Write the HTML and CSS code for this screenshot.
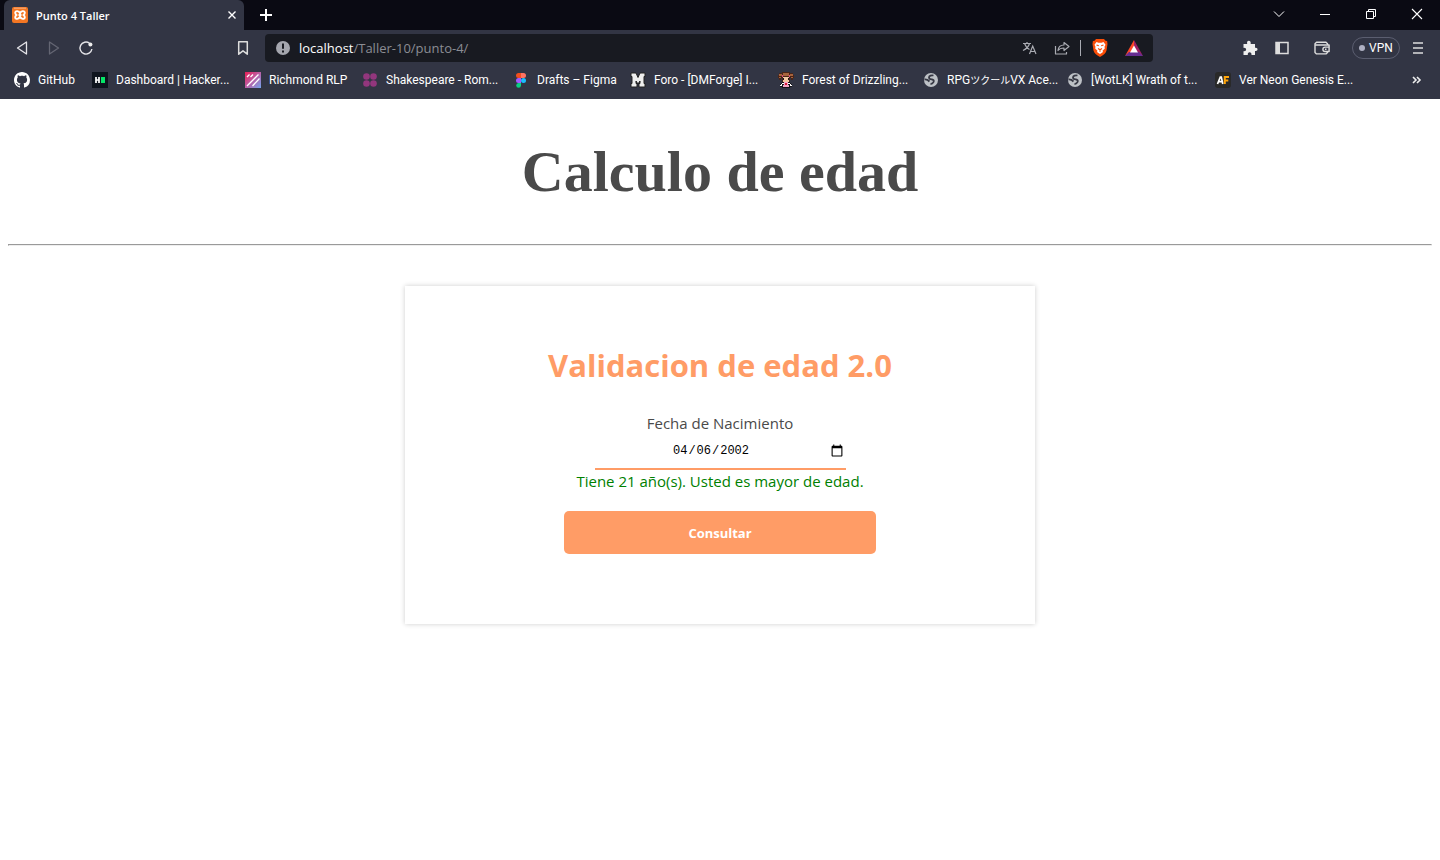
FILE: index.html
```html
<!DOCTYPE html>
<html lang="es">
<head>
<meta charset="utf-8">
<title>Punto 4 Taller</title>
<link rel="stylesheet" href="styles.css">
</head>
<body>
<header class="browser">
  <div class="titlebar">
    <div class="tab">
      <svg class="icon" width="16" height="16" viewBox="0 0 16 16"><rect width="16" height="16" rx="2" fill="#f37623"/><path d="M2 1.2h12" stroke="#f9b180"/><path d="M8 6.3C7 3.6 3.2 3.4 3.2 5.8c0 1 .5 1.6 1.2 2.2-.7.6-1.2 1.3-1.2 2.2 0 2.4 3.8 2.2 4.8-.5 1 2.700 4.800 2.900 4.800.5 0-.9-.5-1.600-1.200-2.200.7-.6 1.200-1.200 1.200-2.200 0-2.400-3.800-2.200-4.800.5zM6.500 8h3" fill="none" stroke="#fff" stroke-width="1.900"/></svg>
      <span class="tab-title">Punto 4 Taller</span>
      <button class="plain" aria-label="Cerrar pestaña"><svg width="8" height="8" viewBox="0 0 8 8"><path d="M.5.5l7 7M7.500.5l-7 7" stroke="#fff" stroke-width="1.400"/></svg></button>
    </div>
    <button class="plain new-tab" aria-label="Nueva pestaña"><svg width="12" height="12" viewBox="0 0 12 12"><path d="M6 0v12M0 6h12" stroke="#fff" stroke-width="2"/></svg></button>
    <div class="window-controls">
      <button class="plain" aria-label="Buscar pestañas"><svg width="12" height="12" viewBox="0 0 12 12"><path d="M1 3.500l5 5 5-5" fill="none" stroke="#fff"/></svg></button>
      <button class="plain" aria-label="Minimizar"><svg width="12" height="12" viewBox="0 0 12 12"><path d="M1 6.500h10" stroke="#fff"/></svg></button>
      <button class="plain" aria-label="Restaurar"><svg width="12" height="12" viewBox="0 0 12 12"><path d="M1.500 3.500h7v7h-7zM3.500 3.500v-2h7v7h-2" fill="none" stroke="#fff"/></svg></button>
      <button class="plain" aria-label="Cerrar"><svg width="12" height="12" viewBox="0 0 12 12"><path d="M1 1l10 10M11 1L1 11" stroke="#fff" stroke-width="1.100"/></svg></button>
    </div>
  </div>

  <div class="toolbar">
    <div class="nav">
      <button class="plain" aria-label="Atrás"><svg width="16" height="16" viewBox="0 0 16 16"><path d="M12.500 2v12L3.500 8z" fill="none" stroke="#e4e4e8" stroke-width="1.300" stroke-linejoin="round"/></svg></button>
      <button class="plain" aria-label="Adelante"><svg width="16" height="16" viewBox="0 0 16 16"><path d="M3.500 2v12L12.500 8z" fill="none" stroke="#646673" stroke-width="1.300" stroke-linejoin="round"/></svg></button>
      <button class="plain" aria-label="Recargar"><svg width="16" height="16" viewBox="0 0 16 16"><path d="M11.500 3.200A6 6 0 1 0 13.900 9" fill="none" stroke="#e4e4e8" stroke-width="1.400"/><circle cx="12.400" cy="4.500" r="2" fill="#eee"/></svg></button>
    </div>
    <button class="plain save" aria-label="Guardar marcador"><svg width="16" height="16" viewBox="0 0 16 16"><path d="M3.700 1.800h8.600v12.400L8 10.800l-4.300 3.400z" fill="none" stroke="#ddd" stroke-width="1.500" stroke-linejoin="round"/></svg></button>
    <div class="address">
      <svg class="icon" width="16" height="16" viewBox="0 0 16 16"><circle cx="8" cy="8" r="7" fill="#a4a6ae"/><path d="M8 3.500v5.200M8 10.500v2" stroke="#181a21" stroke-width="2"/></svg>
      <div class="url"><span class="host">localhost</span>/Taller-10/punto-4/</div>
      <button class="plain" aria-label="Traducir"><svg width="16" height="16" viewBox="0 0 16 16" fill="none" stroke="#a9abb2" stroke-width="1.200"><path d="M1 3.500h8M5 2v1.500M2.500 3.500c1 3 3 5 5 6M7.500 3.500C6.500 7 4 9 1 10.500M7.500 14l3.200-8 3.300 8M8.600 11.500h4.300"/></svg></button>
      <button class="plain" aria-label="Compartir"><svg width="16" height="16" viewBox="0 0 16 16" fill="none" stroke="#a9abb2" stroke-width="1.200" stroke-linejoin="round"><path d="M1.500 6v8h11v-2M4 10.500c.3-3.500 2.200-5.500 6-5.500V2.500L15 6.500l-5 4V8C7 8 5.200 8.800 4 10.500z"/></svg></button>
      <span class="divider"></span>
      <button class="plain shield" aria-label="Brave Shields"><svg width="18" height="20" viewBox="0 0 18 20"><path d="M5 1h8l1.500 1.700 1.600.3.400 3-1 6.500c-.4 2.500-3 4.500-6.500 6.500-3.500-2-6.100-4-6.500-6.500L1.500 6l.4-3 1.600-.3z" fill="#fb4e08"/><path d="M5.500 4l2 .7h3l2-.7 2 2.800-1 2 .3 1.600-2.300 2.300L12 14l-3 2-3-2 .5-1.300-2.300-2.300.3-1.600-1-2z" fill="#fff"/><path d="M5.500 7l2.300.8M12.500 7l-2.300.8M7 10.500l2 1.300 2-1.300M9 11.800v2" stroke="#fb4e08" stroke-width="1.200" fill="none"/></svg></button>
      <button class="plain" aria-label="Brave Rewards"><svg width="18" height="16" viewBox="0 0 18 16"><path d="M9 0L0 16l9-5.500z" fill="#ff4726"/><path d="M9 0l9 16-9-5.500z" fill="#9e1f63"/><path d="M0 16h18l-4-4H4z" fill="#662d91"/><path d="M9 5.500l4 7H5z" fill="#fff"/></svg></button>
    </div>
    <div class="actions">
      <button class="plain" aria-label="Extensiones"><svg width="16" height="16" viewBox="0 0 16 16"><path d="M1.500 4h3.700C4.700 1.500 5.500.8 6.800.8S9 1.600 8.700 4H13v3.700c1.800-.3 2.500.5 2.500 1.600s-.8 2-2.500 1.600V15H9.500c.2-2-.6-2.800-1.900-2.800S5.600 13 5.800 15H1.500v-3.800c1.800.2 2.600-.5 2.600-1.600s-.8-1.900-2.600-1.700z" fill="#eee"/></svg></button>
      <button class="plain" aria-label="Barra lateral"><svg width="16" height="16" viewBox="0 0 16 16"><path d="M2 2.500h12v11H2z" fill="none" stroke="#ddd" stroke-width="1.500"/><path d="M2 2.500h4v11H2z" fill="#ddd"/></svg></button>
      <button class="plain wallet" aria-label="Cartera"><svg width="16" height="16" viewBox="0 0 16 16" fill="none" stroke="#ddd" stroke-width="1.400" stroke-linejoin="round"><path d="M13.500 5.500V3.800L12 2.300H2.500L1 3.800v8.700l1.500 1.400H12l1.500-1.400v-1M1.500 5h13.600v6.500h-4a2.200 2.200 0 0 1 0-4.400h4M11 9.300h1.500"/></svg></button>
      <button class="vpn"><span class="vpn-dot"></span>VPN</button>
      <button class="plain" aria-label="Menú"><svg width="12" height="14" viewBox="0 0 12 14"><path d="M1 2h10M1 7h10M1 12h10" stroke="#ddd" stroke-width="1.600"/></svg></button>
    </div>
  </div>

  <nav class="bookmarks" aria-label="Marcadores">
    <a href="#"><svg class="icon" width="16" height="16" viewBox="0 0 16 16"><path fill="#fff" d="M8 0C3.580 0 0 3.580 0 8c0 3.540 2.290 6.530 5.470 7.590.4.070.55-.17.55-.38 0-.19-.01-.82-.01-1.490-2.010.37-2.530-.49-2.690-.94-.09-.23-.48-.94-.82-1.130-.28-.15-.68-.52-.01-.53.63-.01 1.080.58 1.230.82.72 1.210 1.870.87 2.330.66.07-.52.28-.87.51-1.070-1.780-.2-3.640-.89-3.640-3.950 0-.87.31-1.590.82-2.150-.08-.2-.36-1.020.08-2.120 0 0 .67-.21 2.200.82.64-.18 1.320-.27 2-.27s1.360.09 2 .27c1.530-1.040 2.200-.82 2.200-.82.44 1.100.16 1.920.08 2.120.51.56.82 1.270.82 2.150 0 3.070-1.870 3.750-3.650 3.950.29.25.54.73.54 1.480 0 1.070-.01 1.930-.01 2.200 0 .21.15.46.55.38A8 8 0 0 0 16 8c0-4.420-3.580-8-8-8z"/></svg>GitHub</a>
    <a href="#"><svg class="icon" width="16" height="16" viewBox="0 0 16 16"><path fill="#0e141e" d="M0 0h16v16H0z"/><path d="M4 5v6M7 5v6M4 8h3" stroke="#fff" stroke-width="1.700"/><path fill="#05e566" d="M9 5h4v6H9z"/></svg>Dashboard | Hacker...</a>
    <a href="#"><svg class="icon" width="16" height="16" viewBox="0 0 16 16"><defs><linearGradient id="rlp" x2="1" y2="1"><stop stop-color="#e91e55"/><stop offset=".5" stop-color="#bb60a6"/><stop offset="1" stop-color="#73a5ee"/></linearGradient></defs><path fill="url(#rlp)" d="M0 0h16v16H0z"/><path d="M2 14L13.500 2.500M7.500 14L14.500 6.500M2 5l2.500-2.500M5.500 5L8 2.500" stroke="#fff" stroke-width="1.300"/></svg>Richmond RLP</a>
    <a href="#"><svg class="icon" width="16" height="16" viewBox="0 0 16 16"><g fill="#92367d"><circle cx="4.500" cy="4.500" r="3.300"/><circle cx="11.500" cy="4.500" r="3.300"/><circle cx="4.500" cy="11.500" r="3.300"/><circle cx="11.500" cy="11.500" r="3.300"/></g></svg>Shakespeare - Rom...</a>
    <a href="#"><svg class="icon" width="16" height="16" viewBox="0 0 16 16"><path fill="#f24e1e" d="M8 1H5.500a2.400 2.400 0 0 0 0 5H8z"/><path fill="#ff7262" d="M8 1h2.500a2.400 2.400 0 0 1 0 5H8z"/><path fill="#a259ff" d="M8 6H5.500a2.400 2.400 0 0 0 0 5H8z"/><circle cx="10.500" cy="8.500" r="2.500" fill="#1abcfe"/><path fill="#0acf83" d="M8 11H5.500A2.400 2.400 0 1 0 8 13.500z"/></svg>Drafts – Figma</a>
    <a href="#"><svg class="icon" width="16" height="16" viewBox="0 0 16 16"><path d="M1 1h5l2 4.500L10 1h5v3.500h-1v7h1V15H9v-3.500h1V9l-2 3-2-3v2.500h1V15H1v-3.500h1v-7H1z" fill="#eee" stroke="#222"/></svg>Foro - [DMForge] I...</a>
    <a href="#"><svg class="icon" width="16" height="16" viewBox="0 0 16 16" shape-rendering="crispEdges"><path d="M1 1h3V0h8v1h3v2h1v3h-1v2h-2V6h-1v4H4V6H3v2H1V6H0V3h1z" fill="#492519"/><path d="M1 2h3v2H1zM12 2h3v2h-3zM5 1h6v3H5zM1 5h2v1H1zM13 5h2v1h-2z" fill="#a6633d"/><path d="M5 5h6v5H5z" fill="#f5c7a2"/><path d="M5 6h1v2H5zM10 6h1v2h-1z" fill="#20161b"/><path d="M4 3h1v2H4zM11 3h1v2h-1z" fill="#e34b81"/><path d="M4 10h8v1h1v1h1v3h-2v1H4v-1H2v-3h1v-1h1z" fill="#151419"/><path d="M4 11h2v1H4v2H2v-1h1v-1h1zM10 11h2v1h1v1h1v1h-2v-2h-2z" fill="#fff"/><path d="M6 10h4v3h1v2H5v-2h1z" fill="#f6a5c5"/><path d="M7 11h2v2H7z" fill="#d71c39"/></svg>Forest of Drizzling...</a>
    <a href="#"><svg class="icon" width="16" height="16" viewBox="0 0 16 16"><circle cx="8" cy="8" r="7" fill="#bdc1c6"/><path d="M10.500 3.500C8.500 3 6 3.800 6 5.500s1.500 1.800 3 2 2.300 1.200 1.500 2.600S8 12 7.500 12M1.500 7.500C3.500 7.300 5 8 6.500 9.500" stroke="#363844" stroke-width="1.800" fill="none"/></svg><span>RPG<span class="kana">ツクール</span>VX Ace...</span></a>
    <a href="#"><svg class="icon" width="16" height="16" viewBox="0 0 16 16"><circle cx="8" cy="8" r="7" fill="#bdc1c6"/><path d="M10.500 3.500C8.500 3 6 3.800 6 5.500s1.500 1.800 3 2 2.300 1.200 1.500 2.600S8 12 7.500 12M1.500 7.500C3.500 7.300 5 8 6.500 9.500" stroke="#363844" stroke-width="1.800" fill="none"/></svg>[WotLK] Wrath of t...</a>
    <a href="#"><svg class="icon" width="16" height="16" viewBox="0 0 16 16"><rect width="16" height="16" rx="3" fill="#292929"/><path d="M2.500 12L5.300 5h1l1.500 7M3.500 9.700H7" fill="none" stroke="#fff" stroke-width="1.700"/><path d="M9.800 12V5h4.200M9.800 8.500h3.500" fill="none" stroke="#ffa50a" stroke-width="2"/></svg>Ver Neon Genesis E...</a>
    <button class="plain more" aria-label="Más marcadores"><svg width="10" height="8" viewBox="0 0 10 8"><path d="M1 1l3 3-3 3M5 1l3 3-3 3" fill="none" stroke="#eee" stroke-width="1.600"/></svg></button>
  </nav>
</header>

<main class="page">
  <h1 class="page-title">Calculo de edad</h1>
  <hr class="rule">
  <form class="card" onsubmit="return false">
    <h2 class="card-title">Validacion de edad 2.0</h2>
    <label class="label" for="birth">Fecha de Nacimiento</label>
    <input class="date" type="date" id="birth" value="2002-04-06">
    <output class="result" for="birth">Tiene 21 año(s). Usted es mayor de edad.</output>
    <button class="submit" type="submit">Consultar</button>
  </form>
</main>
</body>
</html>
```
FILE: styles.css
```css
* {
  box-sizing: border-box;
}

body {
  min-height: 100vh;
  margin: 0;
  background: #fff;
  font-family: "Open Sans", "Noto Sans CJK JP", sans-serif;
}

.plain {
  display: flex;
  align-items: center;
  justify-content: center;
  padding: 0;
  border: 0;
  background: none;
}

.icon {
  flex: none;
}

/* Browser frame */
.browser {
  background: #323544;
  color: #fff;
  font-size: 12px;
}

.titlebar {
  display: flex;
  height: 30px;
  padding-left: 4px;
  background: #0a0a13;
}

.tab {
  display: flex;
  align-items: center;
  gap: 8px;
  width: 240px;
  padding: 0 8px;
  border-radius: 6px 6px 0 0;
  background: #323544;
}

.tab-title {
  flex: 1;
  font-size: 11px;
  font-weight: 600;
}

.new-tab {
  width: 44px;
}

.window-controls {
  display: flex;
  margin-left: auto;
}

.window-controls .plain {
  width: 46px;
  height: 28px;
}

.toolbar {
  display: flex;
  align-items: center;
  height: 36px;
  padding: 0 16px 0 14px;
}

.nav {
  display: flex;
  gap: 16px;
  width: 221px;
}

.save {
  width: 16px;
  margin-right: 14px;
}

.address {
  display: flex;
  flex: 1;
  align-items: center;
  gap: 16px;
  height: 28px;
  padding: 0 10px;
  border-radius: 4px;
  background: #181a21;
}

.url {
  flex: 1;
  margin-left: -8px;
  color: #8b8d94;
  font-size: 13px;
}

.host {
  color: #fff;
}

.divider {
  width: 1px;
  height: 16px;
  margin: 0 -6px;
  background: #a9abb2;
}

.actions {
  display: flex;
  align-items: center;
  gap: 16px;
  margin-left: 89px;
}

.wallet {
  margin-left: 8px;
}

.vpn {
  display: flex;
  align-items: center;
  justify-content: center;
  gap: 4px;
  width: 48px;
  height: 22px;
  margin: 0 -4px 0 6px;
  padding: 0;
  border: 1px solid #5b5e70;
  border-radius: 11px;
  background: none;
  color: #fff;
  font-family: Roboto, sans-serif;
  font-size: 12px;
}

.vpn-dot {
  width: 6px;
  height: 6px;
  border-radius: 50%;
  background: #aeb0c2;
}

.bookmarks {
  display: grid;
  grid-template-columns: 78px 153px 117px 151px 117px 148px 145px 144px 148px 1fr auto;
  align-items: center;
  height: 33px;
  padding: 0 18px 5px 14px;
}

.bookmarks a {
  display: flex;
  align-items: center;
  gap: 8px;
  color: #fff;
  font-family: Roboto, "Noto Sans CJK JP", sans-serif;
  font-size: 12px;
  line-height: 16px;
  text-decoration: none;
  white-space: nowrap;
}

.kana {
  font-size: 10px;
}

/* Page */
.page {
  padding: 0 8px 40px;
}

.page-title {
  margin: 0;
  padding: 40px 0 39px;
  color: #4a4a4a;
  font-family: "Liberation Serif", serif;
  font-size: 58px;
  line-height: 66px;
  text-align: center;
}

.rule {
  margin: 0 0 40px;
}

.card {
  display: flex;
  flex-direction: column;
  align-items: center;
  width: 100%;
  max-width: 630px;
  margin: 0 auto;
  padding: 55px 40px 70px;
  background: #fff;
  box-shadow: 0 0 5px rgba(0, 0, 0, 0.2);
}

.card-title {
  margin: 0 0 24px;
  color: #ff9c66;
  font-size: 31px;
  line-height: 48px;
  text-align: center;
}

.label {
  color: #4a4a4a;
  font-size: 15px;
  line-height: 20px;
}

.date {
  width: 251px;
  height: 37px;
  padding: 1px 0 0;
  border: 0;
  border-bottom: 2px solid #ff9c66;
  background: none;
  color: #000;
  font-family: "Liberation Mono", monospace;
  font-size: 12px;
  text-align: center;
}

.date::-webkit-calendar-picker-indicator {
  width: 14px;
  height: 14px;
}

.result {
  margin-bottom: 18px;
  color: green;
  font-size: 15px;
  line-height: 23px;
}

.submit {
  width: 312px;
  height: 43px;
  border: 0;
  border-radius: 5px;
  background: #ff9c66;
  color: #fff;
  font-family: inherit;
  font-size: 13px;
  font-weight: 700;
}
```
